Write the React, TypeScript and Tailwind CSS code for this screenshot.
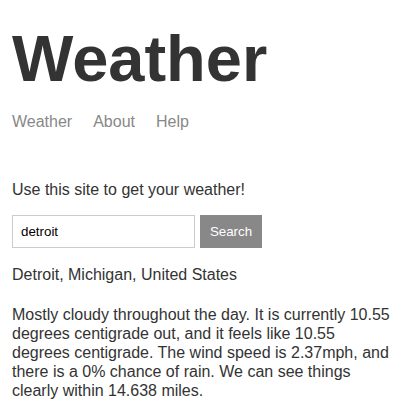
import React from 'react';

const App: React.FC = () => {
  return (
    <div className="min-h-screen bg-white px-3 text-[16px] leading-[19px] text-[#333] font-['Liberation_Sans',Arial,sans-serif]">
      {/* Header */}
      <header className="pt-[22px] mb-[49px]">
        <h1 className="text-[65px] leading-[74px] font-bold mb-4">Weather</h1>
        <nav className="flex gap-[21px] text-[#888]">
          <a href="#">Weather</a>
          <a href="#">About</a>
          <a href="#">Help</a>
        </nav>
      </header>

      <main>
        <p className="mb-4">Use this site to get your weather!</p>

        <form className="flex gap-[5px] mb-[17px]" onSubmit={(e) => e.preventDefault()}>
          <input
            defaultValue="detroit"
            className="w-[183px] border border-[#ccc] p-2 text-[13.33px] leading-[15.33px] text-black outline-none"
          />
          <button className="w-[62px] border border-[#888] bg-[#888] py-2 text-center text-[13.33px] leading-[15.33px] text-white">
            Search
          </button>
        </form>

        <p className="mb-[21px]">Detroit, Michigan, United States</p>
        <p>
          Mostly cloudy throughout the day. It is currently 10.55 degrees centigrade out, and it feels like 10.55
          degrees centigrade. The wind speed is 2.37mph, and there is a 0% chance of rain. We can see things clearly
          within 14.638 miles.
        </p>
      </main>
    </div>
  );
};

export default App;
